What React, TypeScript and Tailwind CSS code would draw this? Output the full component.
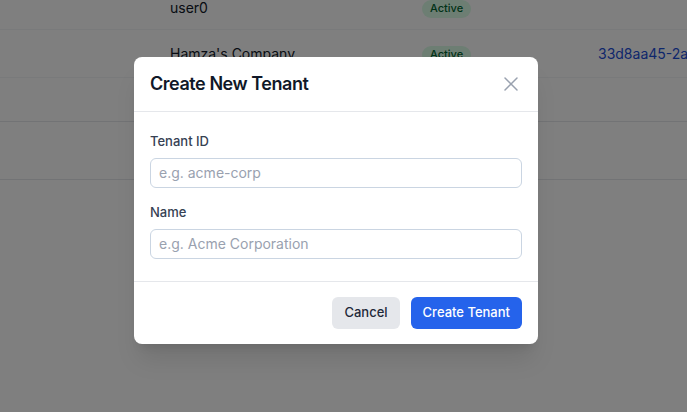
import { X } from 'lucide-react';

function Badge() {
  return (
    <span className="inline-flex h-[18px] items-center rounded-full bg-green-100 px-2 text-[11px] font-medium text-green-800">
      Active
    </span>
  );
}

export default function App() {
  return (
    <div className="relative h-[412px] w-full overflow-hidden bg-white font-['Inter',sans-serif]">
      <div className="-mt-[14px]">
        <div className="flex h-[44px] items-center border-b border-gray-100 text-sm text-gray-900">
          <div className="w-[170px] shrink-0" />
          <div className="w-[252px] shrink-0">user0</div>
          <div className="w-[176px] shrink-0">
            <Badge />
          </div>
        </div>
        <div className="flex h-[48px] items-center border-b border-gray-100 text-sm text-gray-900">
          <div className="w-[170px] shrink-0" />
          <div className="w-[252px] shrink-0">Hamza's Company</div>
          <div className="w-[176px] shrink-0">
            <Badge />
          </div>
          <div className="whitespace-nowrap text-[#1d4ed8]">33d8aa45-2ab1-4c</div>
        </div>
        <div className="h-[44px] border-b border-gray-200" />
        <div className="h-[58px] border-b border-gray-200" />
      </div>

      <div className="absolute inset-0 flex items-center justify-center bg-black/50 pb-[12px] pr-[15px]">
        <div className="w-[404px] rounded-lg bg-white shadow-xl">
          <div className="flex h-[55px] items-center justify-between border-b border-gray-200 pl-4 pr-[15px]">
            <h2 className="text-lg font-semibold tracking-tight text-gray-900">Create New Tenant</h2>
            <X size={24} strokeWidth={1.5} className="text-gray-400" />
          </div>
          <div className="px-4 pb-[22px] pt-[19px]">
            <label className="mb-[7px] block text-[13px] leading-5 font-medium text-gray-700">Tenant ID</label>
            <input
              className="block h-[30px] w-full rounded-md border border-slate-300 px-2 text-sm outline-none placeholder:text-gray-400"
              placeholder="e.g. acme-corp"
            />
            <label className="mb-[7px] mt-[14px] block text-[13px] leading-5 font-medium text-gray-700">Name</label>
            <input
              className="block h-[30px] w-full rounded-md border border-slate-300 px-2 text-sm outline-none placeholder:text-gray-400"
              placeholder="e.g. Acme Corporation"
            />
          </div>
          <div className="flex justify-end gap-[11px] border-t border-gray-200 px-4 pb-[15px] pt-[15px]">
            <button className="h-8 rounded-md bg-[#e5e7eb] px-3 text-[13px] font-medium text-gray-800">Cancel</button>
            <button className="h-8 rounded-md bg-[#2563eb] px-3 text-[13px] font-medium text-white">Create Tenant</button>
          </div>
        </div>
      </div>
    </div>
  );
}
